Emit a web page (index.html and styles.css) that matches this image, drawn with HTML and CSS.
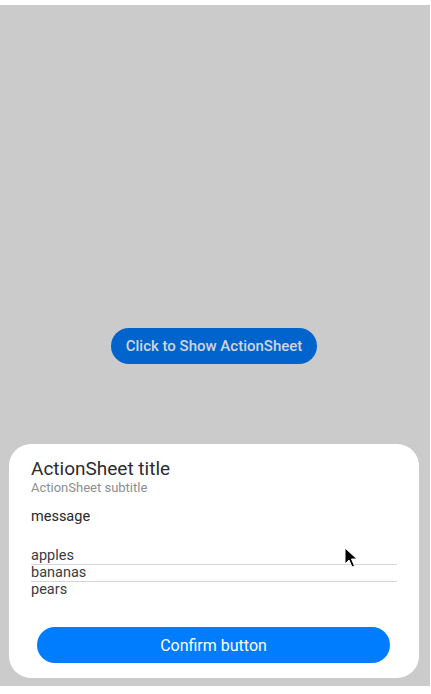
FILE: index.html
```html
<!DOCTYPE html>
<html>
<head>
<meta charset="utf-8">
<link rel="stylesheet" href="styles.css">
</head>
<body>
<div class="page">
  <div class="stage">
    <button class="show-btn">Click to Show ActionSheet</button>
    <div class="sheet">
      <div class="sheet-title">ActionSheet title</div>
      <div class="sheet-subtitle">ActionSheet subtitle</div>
      <div class="sheet-message">message</div>
      <ul class="sheet-list">
        <li class="sheet-item">apples</li>
        <li class="sheet-item">bananas</li>
        <li class="sheet-item last">pears</li>
      </ul>
      <div class="sheet-actions">
        <button class="confirm-btn">Confirm button</button>
      </div>
    </div>
    <svg class="cursor" width="14" height="22" viewBox="0 0 14 22">
      <path d="M1 1 L1 17 L5 13 L8 20 L10.5 19 L7.5 12 L13 12 Z" fill="#000" stroke="#fff" stroke-width="1"/>
    </svg>
  </div>
</div>
</body>
</html>
```
FILE: styles.css
```css
html, body {
  margin: 0;
  padding: 0;
  background: #ffffff;
}
body {
  font-family: Roboto, "Noto Sans", "Liberation Sans", sans-serif;
}
.page {
  padding-top: 5px;
  width: 430px;
}
.stage {
  position: relative;
  height: 681px;
  background: #cbcbcb;
  display: flex;
  align-items: center;
  justify-content: center;
}
.show-btn {
  height: 36px;
  padding: 0 15px;
  border: none;
  border-radius: 18px;
  background: #0064cc;
  color: #cfd6e0;
  font-family: inherit;
  font-size: 15px;
  font-weight: 500;
  margin-left: -2px;
}
.sheet {
  position: absolute;
  left: 9px;
  top: 439px;
  width: 410px;
  height: 234px;
  box-sizing: border-box;
  background: #ffffff;
  border-radius: 22px;
  padding: 13px 22px 0 22px;
  display: flex;
  flex-direction: column;
}
.sheet-title {
  font-size: 19px;
  line-height: 24px;
  color: #2a2c30;
}
.sheet-subtitle {
  font-size: 13px;
  line-height: 14px;
  color: #8b8e92;
}
.sheet-message {
  margin-top: 12px;
  font-size: 14.5px;
  line-height: 20px;
  color: #26282c;
}
.sheet-list {
  list-style: none;
  margin: 21px 0 0 0;
  padding: 0;
  width: 366px;
}
.sheet-item {
  font-size: 14.5px;
  line-height: 16px;
  color: #3a3c40;
  border-bottom: 1px solid #d6d6d6;
}
.sheet-item.last {
  border-bottom: none;
}
.sheet-actions {
  margin-top: 29px;
  display: flex;
  justify-content: center;
}
.confirm-btn {
  width: 353px;
  height: 36px;
  border: none;
  border-radius: 18px;
  background: #007dff;
  color: #ffffff;
  font-family: inherit;
  font-size: 16px;
  font-weight: 400;
  margin-left: -1px;
}
.cursor {
  position: absolute;
  left: 344px;
  top: 542px;
}
```
